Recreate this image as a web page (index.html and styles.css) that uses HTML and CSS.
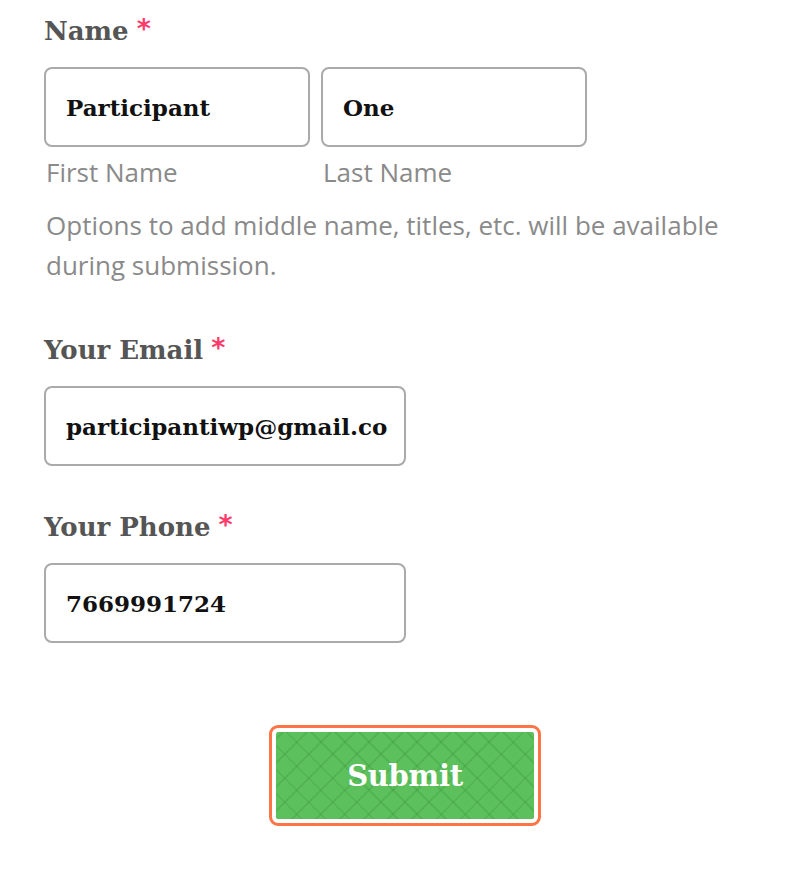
FILE: index.html
```html
<!DOCTYPE html>
<html>
<head>
<meta charset="utf-8">
<link rel="stylesheet" href="styles.css">
</head>
<body>
<form class="form">
  <div class="field">
    <div class="label">Name<span class="req">*</span></div>
    <div class="name-row">
      <div class="name-col">
        <div class="input input-half">Participant</div>
        <div class="sublabel">First Name</div>
      </div>
      <div class="name-col">
        <div class="input input-half">One</div>
        <div class="sublabel">Last Name</div>
      </div>
    </div>
    <p class="desc">Options to add middle name, titles, etc. will be available during submission.</p>
  </div>
  <div class="field field-email">
    <div class="label">Your Email<span class="req">*</span></div>
    <div class="input input-wide">participantiwp@gmail.co</div>
  </div>
  <div class="field field-phone">
    <div class="label">Your Phone<span class="req">*</span></div>
    <div class="input input-wide">7669991724</div>
  </div>
  <div class="actions">
    <div class="submit-ring"><button type="button" class="submit">Submit</button></div>
  </div>
</form>
</body>
</html>
```
FILE: styles.css
```css
html, body { margin: 0; padding: 0; background: #fff; }
.form { padding: 14px 28px 0 44px; }
.label {
  font-family: "DejaVu Serif", serif;
  font-weight: bold;
  font-size: 26px;
  line-height: 34px;
  color: #555;
  margin-bottom: 19px;
}
.req {
  display: inline-block;
  color: #ff3b6b;
  font-family: "DejaVu Sans", sans-serif;
  font-weight: bold;
  font-size: 27px;
  line-height: 34px;
  vertical-align: top;
  margin-left: 8px;
  transform: translateY(-2px);
}
.name-row { display: flex; gap: 11px; }
.name-col { display: flex; flex-direction: column; }
.input {
  box-sizing: border-box;
  height: 80px;
  border: 2px solid #aaa;
  border-radius: 8px;
  padding: 0 20px;
  display: flex;
  align-items: center;
  font-family: "DejaVu Serif", serif;
  font-weight: bold;
  font-size: 23px;
  color: #111;
  overflow: hidden;
  white-space: nowrap;
}
.input-half { width: 266px; }
.input-wide { width: 362px; }
.sublabel {
  margin-top: 10px;
  font-family: "Open Sans", sans-serif;
  font-size: 26px;
  line-height: 30px;
  color: #8a8a8a;
  padding-left: 2px;
}
.desc {
  margin: 18px 0 0;
  font-family: "Open Sans", sans-serif;
  font-size: 26px;
  line-height: 40px;
  color: #8a8a8a;
  padding-left: 2px;
}
.field-email { margin-top: 48px; }
.field-phone { margin-top: 44px; }
.actions { margin-top: 82px; display: flex; justify-content: center; }
.submit-ring {
  border: 3px solid #ff7444;
  border-radius: 9px;
  padding: 4px;
  background: #fff;
}
.submit {
  display: block;
  width: 258px;
  height: 87px;
  border: 0;
  border-radius: 2px;
  background-color: #5cc15c;
  background-image:
    repeating-linear-gradient(45deg, rgba(60,150,60,0.3) 0 2px, transparent 2px 17px),
    repeating-linear-gradient(-45deg, rgba(60,150,60,0.3) 0 2px, transparent 2px 17px);
  color: #fff;
  font-family: "DejaVu Serif", serif;
  font-weight: bold;
  font-size: 29px;
  letter-spacing: -0.3px;
  cursor: pointer;
}
```
